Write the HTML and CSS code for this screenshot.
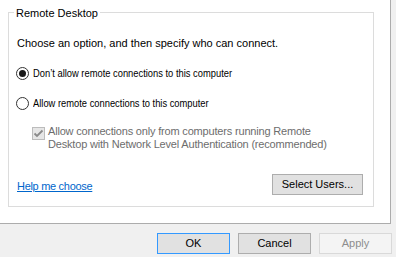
FILE: index.html
```html
<!DOCTYPE html>
<html lang="en">
<head>
    <meta charset="UTF-8">
    <title>System Properties - Remote</title>
    <link rel="stylesheet" href="styles.css">
</head>
<body>

    <!-- Tab page -->
    <main class="tabPage">

        <fieldset class="groupBox">
            <legend>Remote Desktop</legend>

            <p class="intro">Choose an option, and then specify who can connect.</p>

            <label class="radioRow radioFirst">
                <input type="radio" name="remote" checked>
                <span class="radioText">Don’t allow remote connections to this computer</span>
            </label>

            <label class="radioRow">
                <input type="radio" name="remote">
                <span class="radioText">Allow remote connections to this computer</span>
            </label>

            <div class="checkRow">
                <span class="checkBox">
                    <svg width="11" height="11" viewBox="0 0 11 11">
                        <path d="M1.5 5.5 L4 8 L9.5 2.5" fill="none" stroke="#8a8a8a" stroke-width="1.8"/>
                    </svg>
                </span>
                <span class="checkText">Allow connections only from computers running Remote<br>Desktop with Network Level Authentication (recommended)</span>
            </div>

            <div class="groupFooter">
                <a href="#" class="helpLink">Help me choose</a>
                <button class="btn btnUsers">Select Users...</button>
            </div>
        </fieldset>

    </main>

    <!-- Dialog buttons -->
    <footer class="dialogButtons">
        <button class="btn btnDefault">OK</button>
        <button class="btn">Cancel</button>
        <button class="btn" disabled>Apply</button>
    </footer>

</body>
</html>
```

FILE: styles.css
```css
/* General */
html, body { margin: 0; padding: 0; }
body
{
    width: 396px;
    height: 257px;
    overflow: hidden;
    background-color: #f0f0f0;
    font-family: "Liberation Sans", Arial, sans-serif;
    font-size: 11px;
    line-height: 13px;
    color: #000000;
}

/* Tab page */
.tabPage
{
    width: 390px;
    height: 218px;
    background-color: #ffffff;
    border-right: 1px solid #acacac;
    border-bottom: 1px solid #acacac;
    padding-top: 5px;
}

/* Group box */
.groupBox
{
    margin: 0 0 0 8px;
    width: 366px;
    height: 202px;
    box-sizing: border-box;
    border: 1px solid #dcdcdc;
    padding: 0 10px 0 8px;
}
.groupBox legend
{
    padding: 2px 2px 0 2px;
    margin-left: -3px;
    line-height: 12px;
}

.intro { margin: 18px 0 0 0; }

/* Radios */
.radioRow
{
    display: flex;
    align-items: center;
    margin: 17px 0 0 -1px;
    height: 13px;
}

.radioRow input
{
    appearance: none;
    -webkit-appearance: none;
    margin: 0 4px 0 0;
    width: 13px;
    height: 13px;
    border: 1px solid #333333;
    border-radius: 50%;
    background: #ffffff;
    display: grid;
    place-content: center;
}
.radioRow input:checked::after
{
    content: "";
    width: 7px;
    height: 7px;
    border-radius: 50%;
    background: #1a1a1a;
}
.radioText
{
    display: inline-block;
    white-space: nowrap;
    transform: scaleX(0.85);
    transform-origin: left center;
}

/* Disabled checkbox */
.checkRow
{
    display: flex;
    align-items: flex-start;
    margin: 15px 0 0 15px;
}
.checkBox
{
    width: 13px;
    height: 13px;
    box-sizing: border-box;
    border: 1px solid #bcbcbc;
    background: #e6e6e6;
    margin: 2px 3px 0 0;
    display: grid;
    place-content: center;
}
.checkBox svg { display: block; }
.checkText { color: #6d6d6d; letter-spacing: -0.18px; }

/* Footer of the group */
.groupFooter
{
    display: flex;
    justify-content: space-between;
    align-items: center;
    margin-top: 23px;
}
.helpLink
{
    color: #0066cc;
    text-decoration: underline;
    margin-top: 3px;
    letter-spacing: -0.3px;
}

/* Buttons */
.btn
{
    font-family: inherit;
    font-size: 11px;
    line-height: 13px;
    color: #000000;
    background-color: #e1e1e1;
    border: 1px solid #adadad;
    width: 73px;
    height: 21px;
    padding: 0;
    margin: 0;
}
.btnUsers { width: 91px; }
.btnDefault { border-color: #3399ff; }
.btn:disabled
{
    color: #8d8d8d;
    background-color: #f4f4f4;
    border-color: #d9d9d9;
}

.dialogButtons
{
    display: flex;
    justify-content: flex-end;
    gap: 8px;
    padding: 9px 4px 0 0;
}
```
